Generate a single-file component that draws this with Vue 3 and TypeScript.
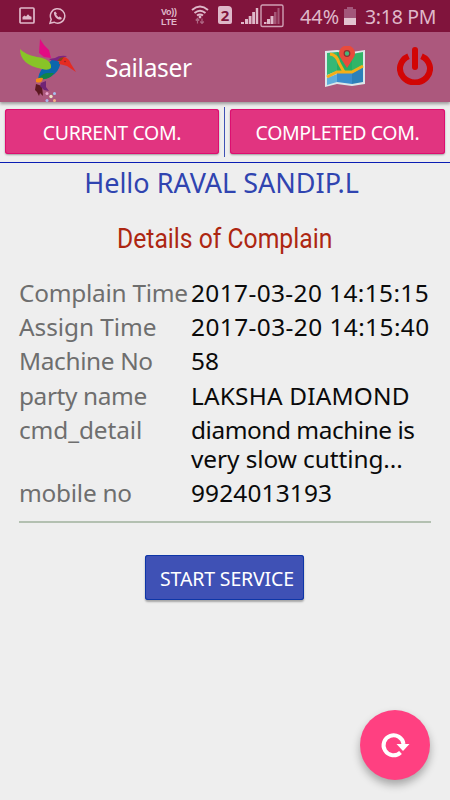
<script setup lang="ts">
interface Line {
  text: string
  tracking: number
}
interface Detail {
  label: Line
  value: Line[]
}

const line = (text: string, tracking: number): Line => ({ text, tracking })

const details: Detail[] = [
  { label: line('Complain Time', -0.25), value: [line('2017-03-20 14:15:15', 0.4)] },
  { label: line('Assign Time', -0.05), value: [line('2017-03-20 14:15:40', 0.43)] },
  { label: line('Machine No', -0.36), value: [line('58', 0)] },
  { label: line('party name', -0.38), value: [line('LAKSHA DIAMOND', 0.2)] },
  { label: line('cmd_detail', -0.1), value: [line('diamond machine is', -0.45), line('very slow cutting...', -0.07)] },
  { label: line('mobile no', -0.25), value: [line('9924013193', 0.16)] },
]
</script>

<template>
  <div class="screen">
    <div class="status">
      <svg class="s-image" width="16" height="17" viewBox="0 0 16 17">
        <rect x="1" y="1" width="14" height="15" rx="1" fill="none" stroke="#dfb8c9" stroke-width="1.7" />
        <path d="M3.500 12.500V10l2-1.500 1.500 1 2-2.200 1.600 1.700 1.900.7v2.800z" fill="#dfb8c9" />
      </svg>
      <svg class="s-chat" width="17" height="18" viewBox="0 0 17 18">
        <path d="M1 16.300l1.200-4A7.200 7.200 0 1 1 5 15.200z" fill="none" stroke="#dfb8c9" stroke-width="1.5" />
        <path d="M5 5.200l1.400-.8 1.500 2.300-.8 1.100 2.400 2.500 1.200-.8 2.200 1.500-.8 1.500c-3.600.9-7.800-3.700-7.100-7.300z" fill="#dfb8c9" />
      </svg>
      <div class="volte"><span class="vo">Vo))</span><span class="lte">LTE</span></div>
      <svg class="s-wifi" width="18" height="19" viewBox="0 0 18 19">
        <g fill="none" stroke="#dfb8c9" stroke-width="1.9">
          <path d="M1 5Q9-1.800 17 5M3.500 8Q9 3.400 14.500 8M6 10.600Q9 8.200 12 10.600" />
        </g>
        <circle cx="9" cy="12" r="1.400" fill="#dfb8c9" />
        <path d="M6.500 18.500v-5M4.700 15.500l1.800-2 1.800 2M11 13.500v5M9.200 16.500l1.800 2 1.800-2" stroke="#ae6683" fill="none" stroke-width="1.2" />
      </svg>
      <div class="sim">2</div>
      <svg class="s-signal" width="43" height="24" viewBox="0 0 43 24">
        <path d="M0 20v-2h3v2zM4 20v-5h3v5zM7.700 20v-8h2.800v8zM11.200 20V8H14v12zM14.800 20V4h2.400v16z" fill="#dfb8c9" />
        <path d="M23 20v-2h2.500v2zM26 20v-5h3v5zM29.500 20v-8h3v8z" fill="#dfb8c9" />
        <path d="M33 20V8h2.500v12zM36.500 20V4h2v16z" fill="#a45676" />
        <rect x="20" y="1" width="22" height="21.500" rx="1.500" fill="none" stroke="#cfa0b4" stroke-width="1.4" />
      </svg>
      <span class="percent">44%</span>
      <svg class="s-battery" width="12" height="18" viewBox="0 0 12 18">
        <path d="M0 2h3V0h6v2h3v9H0z" fill="#a3567a" />
        <path d="M0 11h12v7H0z" fill="#e3c3d0" />
      </svg>
      <span class="clock">3:18 PM</span>
    </div>

    <header class="bar">
      <svg class="bird" width="60" height="64" viewBox="0 0 60 64">
        <path d="M21 6l4 6 5 5 2 8-7-1-5-4z" fill="#e20b83" />
        <path d="M30 26l6-1q4-3 12-2l-7 4-5 3z" fill="#7c2483" />
        <path d="M33 27l5 1q5 1 2 7-3 7-12 10l-9 1q0-9 14-19z" fill="#0b67ac" />
        <path d="M1 16q4 5 17 8 15 2 14 11-3 3-9 1Q1 32 1 16z" fill="#88c427" />
        <path d="M20 45q4-5 9-5h6q-4 7-13 6z" fill="#118449" />
        <path d="M17 46q5-2 7-1-1 6-7 4z" fill="#f28b16" />
        <path d="M40 31q0-6 5-7 5 1 7 7l5 8-9-6q-3-1-8-2z" fill="#e52b22" />
        <path d="M38 28l3-3 4-1-3 4z" fill="#83441c" />
        <circle cx="46" cy="28.500" r="0.800" fill="#8b1e22" />
        <path d="M17 51l6 2 1 10-3-3-1 3-2-4-2-2z" fill="#5c1821" />
        <path d="M22 50l5-2 0 6 3 4-5-1-4-4z" fill="#702475" />
      </svg>
      <svg class="sparkle" width="12" height="10" viewBox="0 0 12 10">
        <circle cx="2" cy="1.500" r="1.500" fill="#eba8ce" />
        <circle cx="9.500" cy="1.500" r="1.500" fill="#a6c1ee" />
        <circle cx="6" cy="4.500" r="1.700" fill="#eee3c3" />
        <circle cx="2" cy="8.500" r="1.500" fill="#acb4eb" />
        <circle cx="9.500" cy="8.500" r="1.500" fill="#f3b187" />
      </svg>
      <h1>Sailaser</h1>
      <svg class="map" width="42" height="42" viewBox="0 0 42 42">
        <path d="M1 5l12-1 15 2 13-2v34l-13 2-15-2-12 3z" fill="#dce7e9" />
        <path d="M3 7l10-1v19L3 29z" fill="#35b876" />
        <path d="M13 6l15 2v18H13z" fill="#25ad62" />
        <path d="M28 8l11-2v15l-11 5z" fill="#31b567" />
        <path d="M3 32l10-4v8L3 39z" fill="#60aedc" />
        <path d="M13 27h15v11l-15-2z" fill="#3a8dce" />
        <path d="M28 27l11-6v15l-11 2z" fill="#2c80b9" />
        <path d="M3 31l10-5h15l11-6" fill="none" stroke="#f4ae18" stroke-width="3" />
        <path d="M6 8q7 1 9 9l5 9" fill="none" stroke="#f4ae18" stroke-width="3" />
        <path d="M23 22l-7-11a8 7.800 0 1 1 14 0z" fill="#e84b3c" />
        <circle cx="23" cy="7.500" r="2.800" fill="#47b779" stroke="#8d2f32" stroke-width="1.200" />
      </svg>
      <svg class="power" width="36" height="40" viewBox="0 0 36 40">
        <path d="M11.500 11.200A15 13.800 0 1 0 24.500 11.200" fill="none" stroke="#d20505" stroke-width="6" />
        <path d="M18 5v17" stroke="#d20505" stroke-width="6" stroke-linecap="round" />
      </svg>
    </header>

    <nav class="tabs">
      <button class="pink"><span>CURRENT COM.</span></button>
      <i class="divider"></i>
      <button class="pink wide"><span>COMPLETED COM.</span></button>
    </nav>

    <main>
      <p class="hello"><span>Hello RAVAL SANDIP.L</span></p>
      <h2><span>Details of Complain</span></h2>
      <dl>
        <div v-for="d in details" :key="d.label.text" class="row">
          <dt :style="{ letterSpacing: d.label.tracking + 'px' }">{{ d.label.text }}</dt>
          <dd>
            <div v-for="v in d.value" :key="v.text" :style="{ letterSpacing: v.tracking + 'px' }">{{ v.text }}</div>
          </dd>
        </div>
      </dl>
      <button class="start"><span>START SERVICE</span></button>
    </main>

    <button class="fab" aria-label="Refresh">
      <svg width="30" height="26" viewBox="0 0 30 26">
        <path d="M20.500 20.500A10 10 0 1 1 23.500 12" fill="none" stroke="#fff" stroke-width="4" />
        <path d="M16.500 12h13l-6.500 7z" fill="#fff" />
      </svg>
    </button>
  </div>
</template>

<style>
body {
  margin: 0;
}
</style>

<style scoped>
* {
  box-sizing: border-box;
}
.screen {
  position: relative;
  width: 450px;
  height: 800px;
  overflow: hidden;
  background: #eeeeee;
  font-family: "Noto Sans", sans-serif;
}
svg {
  display: block;
  flex: none;
}
button {
  border: 0;
  padding: 0;
  font-family: inherit;
}
span {
  white-space: nowrap;
}
.status {
  display: flex;
  align-items: flex-start;
  height: 32px;
  background: #80143c;
  color: #dfb8c9;
}
.s-image {
  margin: 7px 0 0 19px;
}
.s-chat {
  margin: 7px 0 0 14px;
}
.volte {
  display: flex;
  flex-direction: column;
  width: 18px;
  margin: 7px 0 0 95px;
  font-family: "Liberation Sans", sans-serif;
  font-size: 9px;
  line-height: 10px;
  font-weight: 700;
}
.vo {
  letter-spacing: -0.300px;
}
.lte {
  letter-spacing: -0.200px;
}
.s-wifi {
  margin: 5px 0 0 12px;
}
.sim {
  width: 14px;
  height: 18px;
  margin: 6px 0 0 9px;
  border-radius: 2px 4px 2px 2px;
  background: #dfb8c9;
  color: #80143c;
  font-size: 15px;
  font-weight: 700;
  line-height: 18px;
  text-align: center;
}
.s-signal {
  margin: 4px 0 0 9px;
}
.percent {
  width: 42px;
  margin-left: 16px;
  font-size: 19.800px;
  line-height: 33px;
}
.s-battery {
  margin: 7px 0 0 2px;
}
.clock {
  margin-left: 9px;
  font-size: 19.500px;
  line-height: 33px;
  letter-spacing: -0.300px;
}
.bar {
  position: relative;
  z-index: 1;
  display: flex;
  align-items: flex-start;
  height: 70px;
  background: #ac587d;
  box-shadow: 0 2px 3px rgba(0, 0, 0, 0.35);
}
.bird {
  margin: 1px 0 0 19px;
}
.sparkle {
  position: absolute;
  left: 45px;
  top: 60px;
}
h1 {
  width: 220px;
  margin: 0 0 0 26px;
  color: #fff;
  font-size: 24.500px;
  font-weight: 400;
  line-height: 71px;
  letter-spacing: -0.300px;
}
.map {
  margin: 14px 0 0 -1px;
}
.power {
  margin: 13px 0 0 31px;
}
.tabs {
  display: flex;
  align-items: center;
  justify-content: space-between;
  height: 61px;
  padding: 0 5px;
  border-bottom: 1px solid #0a1eb4;
}
.pink {
  width: 214px;
  height: 45px;
  margin-bottom: 1px;
  padding-top: 1px;
  border-radius: 3px;
  background: #e13480;
  box-shadow: inset 0 0 0 1px #dd0d70, 0 1px 2px rgba(0, 0, 0, 0.35);
  color: #fff;
  font-size: 19.500px;
  letter-spacing: -0.350px;
}
.pink.wide {
  width: 215px;
}
.divider {
  width: 1px;
  height: 50px;
  margin-right: 1px;
  background: #3f51b5;
}
main {
  display: flex;
  flex-direction: column;
  align-items: center;
}
.hello {
  margin: 0;
  padding-right: 7px;
  color: #3044b0;
  font-size: 27px;
  line-height: 40px;
}
h2 {
  margin: 16px 0 0;
  color: #ad2611;
  font-family: Roboto, sans-serif;
  font-size: 27px;
  font-weight: 400;
  line-height: 40px;
}
h2 span {
  display: inline-block;
  transform: scaleX(0.915);
}
dl {
  display: flex;
  flex-direction: column;
  gap: 5px;
  width: 412px;
  margin: 19px 0 0;
  padding-bottom: 14px;
  border-bottom: 2px solid #b3c0b1;
}
.row {
  display: flex;
  font-size: 24.400px;
  line-height: 29.200px;
}
dt {
  width: 172px;
  color: #6e6e6e;
  white-space: nowrap;
}
dd {
  margin: 0;
  color: #0a0a0a;
  white-space: nowrap;
}
.start {
  width: 159px;
  height: 45px;
  margin: 32px 1px 0 0;
  padding: 1px 0 0 5px;
  border-radius: 3px;
  background: #3f51b5;
  box-shadow: inset 0 0 0 1px #0e36a7, 0 2px 2px rgba(0, 0, 0, 0.3);
  color: #fff;
  font-size: 19.500px;
  letter-spacing: -0.150px;
}
.fab {
  position: absolute;
  left: 360px;
  top: 710px;
  display: flex;
  align-items: center;
  justify-content: center;
  width: 70px;
  height: 70px;
  border-radius: 50%;
  background: #ff4081;
  box-shadow: 0 5px 8px rgba(0, 0, 0, 0.3);
}
</style>
